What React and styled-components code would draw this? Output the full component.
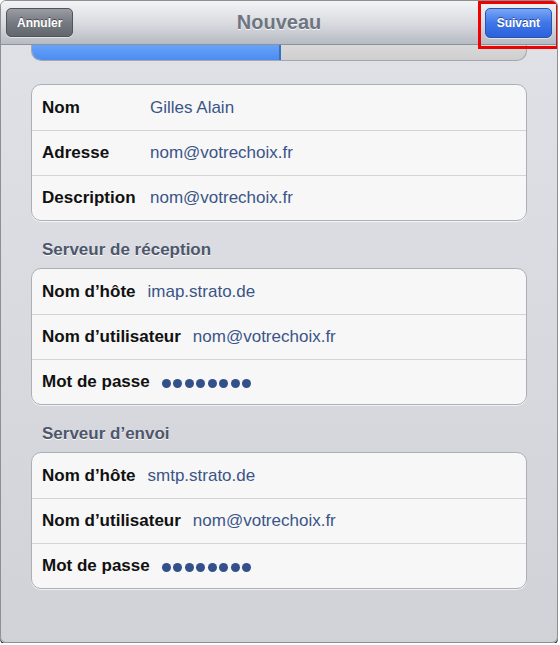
import React from 'react';
import styled, { createGlobalStyle } from 'styled-components';

const GlobalStyle = createGlobalStyle`
  html, body {
    margin: 0;
    padding: 0;
    background: #ffffff;
  }
  body {
    font-family: "Liberation Sans", Arial, Helvetica, sans-serif;
  }
`;

const Window = styled.div`
  width: 556px;
  height: 641px;
  border: 1px solid #8c8f94;
  border-radius: 6px;
  box-shadow: 0 2px 0 #3c3d40;
  overflow: hidden;
  display: flex;
  flex-direction: column;
  background: linear-gradient(#e0e2e7, #d0d2d7);
`;

const NavBar = styled.div`
  height: 44px;
  flex-shrink: 0;
  display: grid;
  grid-template-columns: 1fr auto 1fr;
  align-items: start;
  padding: 7px 5px 0 5px;
  box-sizing: border-box;
  background: linear-gradient(#f3f4f6, #d7d9de 55%, #b6bac2);
  border-bottom: 1px solid #8d929a;
  position: relative;
`;

const Title = styled.div`
  font-size: 20px;
  font-weight: bold;
  color: #6e7580;
  line-height: 29px;
  text-shadow: 0 1px 0 rgba(255, 255, 255, 0.8);
`;

const NavButton = styled.button`
  font-family: inherit;
  font-size: 12px;
  font-weight: bold;
  color: #ffffff;
  height: ${p => (p.primary ? 30 : 29)}px;
  padding: 0 ${p => (p.primary ? 11 : 10)}px;
  border-radius: 5px;
  border: 1px solid ${p => (p.primary ? '#2a53ad' : '#50545b')};
  background: ${p =>
    p.primary
      ? 'linear-gradient(#7aa6f5, #3f76e8 50%, #2a62dc)'
      : 'linear-gradient(#9a9da3, #767a81 50%, #62666d)'};
  text-shadow: 0 -1px 0 rgba(0, 0, 0, 0.45);
  box-shadow: 0 1px 0 rgba(255, 255, 255, 0.5);
  position: relative;
  cursor: pointer;
`;

const Right = styled.div`
  display: flex;
  justify-content: flex-end;
`;

const Left = styled.div`
  display: flex;
  justify-content: flex-start;
`;

const Highlight = styled.span`
  position: absolute;
  top: -8px;
  bottom: -12px;
  left: -8px;
  right: -8px;
  border: 3px solid #f00000;
  pointer-events: none;
`;

const Content = styled.div`
  padding: 0 30px 0 30px;
  display: flex;
  flex-direction: column;
`;

const Progress = styled.div`
  height: 15px;
  display: flex;
  border: 1px solid #a4a7ad;
  border-top: none;
  border-radius: 0 0 10px 10px;
  overflow: hidden;
  background: linear-gradient(#d9d9d9, #cfcfcf);
`;

const ProgressFill = styled.div`
  background: linear-gradient(#66a3f8, #4c8cf1);
  border-right: 2px solid #3a6fc2;
`;

const SectionTitle = styled.div`
  font-size: 17px;
  font-weight: bold;
  color: #4d566b;
  line-height: 20px;
  padding: 19px 0 8px 11px;
  text-shadow: 0 1px 0 rgba(255, 255, 255, 0.9);
`;

const Card = styled.div`
  margin-top: ${p => p.top || 0}px;
  background: #f7f7f7;
  border: 1px solid #acafb4;
  border-radius: 10px;
  box-shadow: 0 1px 0 rgba(255, 255, 255, 0.7);
`;

const Row = styled.div`
  height: 45px;
  box-sizing: border-box;
  display: flex;
  align-items: center;
  gap: 12px;
  padding: 0 10px;
  border-top: 1px solid #d2d3d6;
  &:first-child {
    border-top: none;
  }
`;

const Label = styled.div`
  font-size: 17px;
  font-weight: bold;
  color: #111111;
  min-width: ${p => p.width || 0}px;
`;

const Value = styled.div`
  font-size: 17px;
  color: #3a5587;
`;

const Dots = styled.div`
  display: flex;
  gap: 2.5px;
  padding-top: 2px;
`;

const Dot = styled.span`
  width: 9px;
  height: 9px;
  border-radius: 50%;
  background: #34508a;
`;

const Password = () => (
  <Dots>
    {Array.from({ length: 8 }).map((_, i) => (
      <Dot key={i} />
    ))}
  </Dots>
);

const serverRows = host => [
  { label: 'Nom d’hôte', value: host },
  { label: 'Nom d’utilisateur', value: 'nom@votrechoix.fr' },
  { label: 'Mot de passe', password: true },
];

const Group = ({ rows, labelWidth, top }) => (
  <Card top={top}>
    {rows.map(r => (
      <Row key={r.label}>
        <Label width={labelWidth}>{r.label}</Label>
        {r.password ? <Password /> : <Value>{r.value}</Value>}
      </Row>
    ))}
  </Card>
);

const App = () => {
  return (
    <>
      <GlobalStyle />
      <Window>
        <NavBar>
          <Left>
            <NavButton>Annuler</NavButton>
          </Left>
          <Title>Nouveau</Title>
          <Right>
            <NavButton primary>
              Suivant
              <Highlight />
            </NavButton>
          </Right>
        </NavBar>
        <Content>
          <Progress>
            <ProgressFill style={{ width: '50%' }} />
          </Progress>
          <Group
            top={23}
            labelWidth={96}
            rows={[
              { label: 'Nom', value: 'Gilles Alain' },
              { label: 'Adresse', value: 'nom@votrechoix.fr' },
              { label: 'Description', value: 'nom@votrechoix.fr' },
            ]}
          />
          <SectionTitle>Serveur de réception</SectionTitle>
          <Group rows={serverRows('imap.strato.de')} />
          <SectionTitle>Serveur d’envoi</SectionTitle>
          <Group rows={serverRows('smtp.strato.de')} />
        </Content>
      </Window>
    </>
  );
};

export default App;
